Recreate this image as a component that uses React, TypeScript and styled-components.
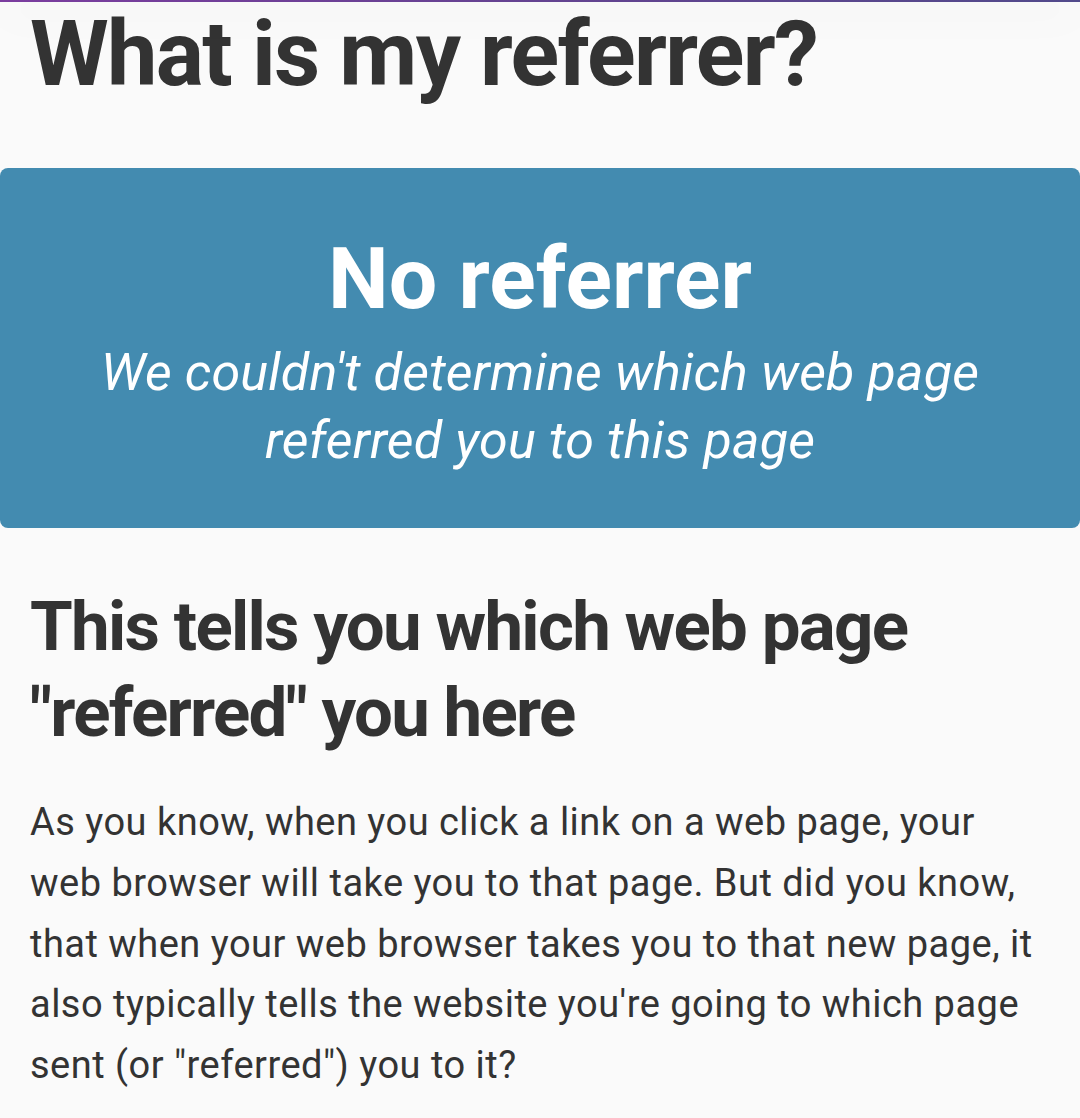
import React from 'react';
import styled, { createGlobalStyle } from 'styled-components';

const GlobalStyle = createGlobalStyle`
  html, body {
    margin: 0;
    padding: 0;
    background: #fafafa;
  }
  body {
    font-family: Roboto, "Liberation Sans", sans-serif;
    color: #333333;
  }
`;

const TopBar = styled.div`
  position: relative;
  z-index: 1;
  height: 2px;
  background: linear-gradient(90deg, #7b3d9f 0%, #644391 50%, #524a8b 100%);
  box-shadow: 0 8px 40px rgba(0, 0, 0, 0.22);
`;

const Page = styled.main`
  display: flex;
  flex-direction: column;
`;

const Title = styled.h1`
  margin: 0 0 60px;
  padding: 0 30px;
  font-size: 90px;
  line-height: 106px;
  font-weight: 700;
  letter-spacing: -1.65px;
`;

const ResultBox = styled.section`
  background: #438bb0;
  border-radius: 8px;
  color: #ffffff;
  text-align: center;
  padding: 59px 30px 53px;
  display: flex;
  flex-direction: column;
  gap: 9px;
`;

const ResultTitle = styled.div`
  font-size: 86px;
  line-height: 103px;
  font-weight: 700;
`;

const ResultNote = styled.div`
  font-size: 52px;
  line-height: 68px;
  font-style: italic;
  font-weight: 400;
  letter-spacing: 0.2px;
  padding: 0 40px;
`;

const Content = styled.div`
  padding: 56px 30px 40px;
`;

const SubTitle = styled.h2`
  margin: 0 0 36px;
  font-size: 69px;
  line-height: 86px;
  font-weight: 700;
  letter-spacing: -1.7px;
`;

const Paragraph = styled.p`
  margin: 0;
  font-size: 38px;
  line-height: 60.75px;
  font-weight: 400;
  letter-spacing: 0.48px;
`;

export default function App() {
  return (
    <>
      <GlobalStyle />
      <TopBar />
      <Page>
        <Title>What is my referrer?</Title>
        <ResultBox>
          <ResultTitle>No referrer</ResultTitle>
          <ResultNote>We couldn't determine which web page referred you to this page</ResultNote>
        </ResultBox>
        <Content>
          <SubTitle>This tells you which web page "referred" you here</SubTitle>
          <Paragraph>
            As you know, when you click a link on a web page, your web browser will take you to that
            page. But did you know, that when your web browser takes you to that new page, it also
            typically tells the website you're going to which page sent (or "referred") you to it?
          </Paragraph>
        </Content>
      </Page>
    </>
  );
}
